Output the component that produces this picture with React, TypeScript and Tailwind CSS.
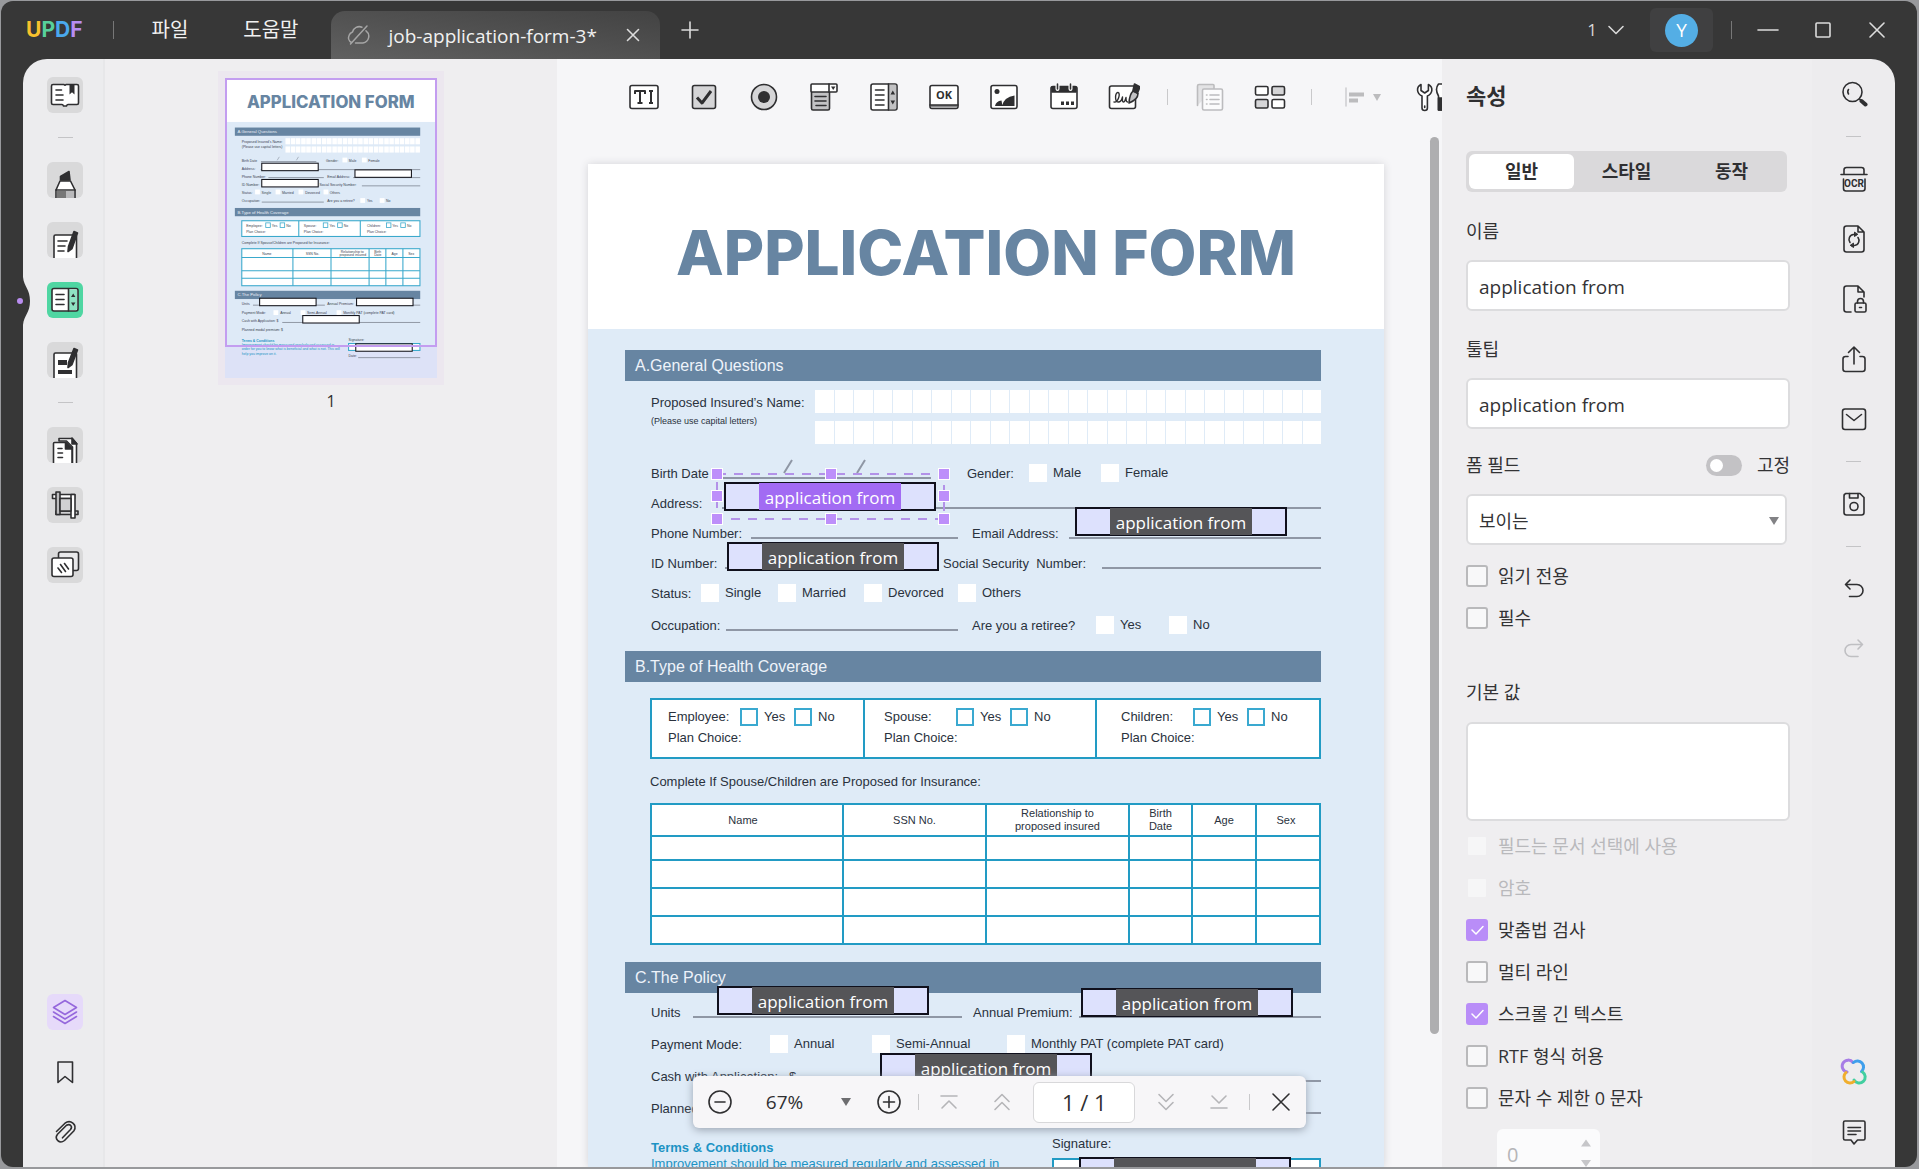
import type { ReactNode } from "react";

const UI = "font-['Open_Sans','Noto_Sans_CJK_KR',sans-serif]";
const DOC = "font-['Liberation_Sans',sans-serif]";

type IconProps = { size?: number; box?: string; children: ReactNode; className?: string };

function Icon({ size = 28, box, children, className = "" }: IconProps) {
  return (
    <svg
      width={size}
      height={size}
      viewBox={box ?? `0 0 ${size} ${size}`}
      fill="none"
      stroke="#2f2f31"
      strokeWidth="1.6"
      strokeLinecap="round"
      strokeLinejoin="round"
      className={`shrink-0 ${className}`}
      aria-hidden="true"
    >
      {children}
    </svg>
  );
}

/* ---------- Title bar ---------- */

function TitleBar() {
  return (
    <header className="flex h-[58px] shrink-0 items-center pl-[25px] text-[#f1f1f1]">
      <div className="font-['Inter',sans-serif] text-[21px] leading-6 font-bold">
        <span className="text-[#f7c12d]">U</span>
        <span className="text-[#58d09b]">P</span>
        <span className="text-[#4aa9ee]">D</span>
        <span className="text-[#b78df3]">F</span>
      </div>
      <span className="ml-[31px] h-[18px] w-px bg-[#777]" />
      <button className="ml-[37px] text-[20px] leading-7">파일</button>
      <button className="ml-[55px] text-[20px] leading-7">도움말</button>
      <div className="ml-[32px] flex h-12 w-[329px] items-center self-end rounded-t-[14px] bg-gradient-to-tr from-[#606060] via-[#515151] to-[#434343] pl-[15px]">
        <Icon size={24}>
          <g stroke="#a5a5a5" strokeWidth="1.5">
            <path d="M5.5 19.5A5.5 5.5 0 0 1 3 12.5 5.5 5.5 0 0 1 6.5 9 7 7 0 0 1 16 4.2" />
            <path d="M20 7.8A6.8 6.8 0 0 1 17 20H9.5" />
            <path d="M21 3 4.5 21" />
          </g>
        </Icon>
        <span className="ml-[19px] pt-[2px] text-[19px] leading-7">job-application-form-3*</span>
        <button aria-label="탭 닫기" className="mr-5 ml-auto">
          <Icon size={14}>
            <path d="M1.5 1.5l11 11M12.5 1.5l-11 11" stroke="#dcdcdc" />
          </Icon>
        </button>
      </div>
      <button aria-label="새 탭" className="ml-[21px]">
        <Icon size={18}>
          <path d="M9 1v16M1 9h16" stroke="#dcdcdc" />
        </Icon>
      </button>
      <div className="mr-[32px] ml-auto flex items-center">
        <button className="flex items-center gap-[10px] text-[17px] leading-6 text-[#d8d8d8]">
          1
          <Icon size={18}>
            <path d="M2 5.5l7 7 7-7" stroke="#d8d8d8" />
          </Icon>
        </button>
        <button className="ml-[25px] flex h-[44px] w-[63px] items-center justify-center rounded-md bg-[#404041]">
          <span className="flex size-[33px] items-center justify-center rounded-full bg-[#54aee5] text-[19px] leading-6 text-white">
            Y
          </span>
        </button>
        <span className="ml-[18px] h-[18px] w-px bg-[#777]" />
        <button aria-label="최소화" className="ml-[25px]">
          <Icon size={22}>
            <path d="M1 11h20" stroke="#dcdcdc" />
          </Icon>
        </button>
        <button aria-label="최대화" className="ml-[36px]">
          <Icon size={16}>
            <rect x="1" y="1" width="14" height="14" rx="1" stroke="#dcdcdc" />
          </Icon>
        </button>
        <button aria-label="닫기" className="ml-[38px]">
          <Icon size={16}>
            <path d="M1 1l14 14M15 1L1 15" stroke="#dcdcdc" />
          </Icon>
        </button>
      </div>
    </header>
  );
}

/* ---------- Left rail ---------- */

function RailButton({ label, tone = "bg-[#d9d9da]", children }: { label: string; tone?: string; children: ReactNode }) {
  return (
    <button aria-label={label} className={`size-9 overflow-hidden rounded-md ${tone}`}>
      <Icon size={36}>{children}</Icon>
    </button>
  );
}

function RailLine() {
  return <span className="h-px w-[15px] bg-[#c4c4c6]" />;
}

function LeftRail() {
  return (
    <nav className="relative flex w-[82px] shrink-0 flex-col items-center border-r-2 border-[#e7e7e9] bg-[#ececee] pt-[18px] pl-[4px]">
      {/* Current-tool marker that bites into the dark frame */}
      <svg width="32" height="48" viewBox="0 0 32 48" className="absolute top-[218px] -left-[23px]" aria-hidden="true">
        <path d="M23 0C24 10 30 12 30 24S24 38 23 48Z" fill="#373737" />
        <circle cx="20" cy="24" r="3" fill="#b98df0" />
      </svg>
      <div className="flex flex-col items-center gap-6">
        <RailButton label="리더">
          <path d="M6 7.5h11q1 1.5 2 0h11a1.5 1.5 0 0 1 1.5 1.5v17a1.5 1.5 0 0 1-1.5 1.5h-9q-1 0-1.5 1.5h-3q-.5-1.500-1.500-1.500H6A1.500 1.500 0 0 1 4.500 26V9A1.500 1.500 0 0 1 6 7.500Z" fill="#fff" />
          <path d="M9 13h5.500M9 18h7M9 23h7" />
          <path d="M22.500 7.500h5v10l-2.500-2.200-2.500 2.200Z" fill="#2f2f31" stroke="none" />
        </RailButton>
        <RailLine />
        <RailButton label="주석">
          <path d="M13.500 18v-3.500L22 9.500l1 8.500Z" fill="#2f2f31" />
          <path d="M13 19h10.500l4.500 9v10H9V28Z" fill="#fff" />
          <path d="M10 29h9v8h-9Z" fill="#777" stroke="none" />
          <path d="M19 29h8v8h-8Z" fill="#b9b9bb" stroke="none" />
          <path d="M9 28h19" />
        </RailButton>
        <RailButton label="편집">
          <path d="M7 38V14.500A1.500 1.500 0 0 1 8.500 13H28a1.500 1.500 0 0 1 1.500 1.500V38" fill="#fff" />
          <path d="M11 19h9M11 24h7M11 29h6" />
          <path d="M27 9.500l3.500 1.500-5.500 15.500-4 3 .5-5Z" fill="#2f2f31" />
        </RailButton>
        <RailButton label="양식" tone="bg-[#4fd6a2]">
          <rect x="5" y="6.500" width="26" height="22.500" rx="2" fill="#fff" />
          <path d="M21.500 7.500H29a1 1 0 0 1 1 1V27a1 1 0 0 1-1 1h-7.500Z" fill="#8fe3c3" stroke="none" />
          <path d="M21.500 7v22M9 12.500h8M9 17.500h8M9 22.500h8" />
          <path d="M24 15l2.200-3.500 2.200 3.500ZM24 20.500l2.200 3.500 2.200-3.500Z" fill="#2f2f31" stroke="none" />
        </RailButton>
        <RailButton label="보안 처리">
          <path d="M7 38V12.500A1.500 1.500 0 0 1 8.500 11H28a1.500 1.500 0 0 1 1.500 1.500V38" fill="#fff" />
          <path d="M11 18h9v5h-9ZM11 28h14v4H11Z" fill="#2f2f31" stroke="none" />
          <path d="M27 6.500l3.500 1.500-5.500 14.500-4 3 .5-5Z" fill="#2f2f31" />
        </RailButton>
        <RailLine />
        <RailButton label="페이지">
          <path d="M12 14v-2.500h13l4.500 5V38h-4V20l-6-6Z" fill="#fff" />
          <path d="M25 11l5 6h-5Z" fill="#2f2f31" />
          <path d="M6.500 38V16.500A1 1 0 0 1 7.500 15.500H19l6 6V38" fill="#fff" />
          <path d="M18.500 15.500l6.500 6.500h-6.500Z" fill="#2f2f31" />
          <path d="M11 21.500h4M11 26h4.500M11 30.500h4.500" />
        </RailButton>
        <RailButton label="자르기">
          <path d="M5.500 7.500h22v4h-22Z" fill="#fff" />
          <path d="M9 24h22v3.500H9Z" fill="#d0d0d2" />
          <path d="M9 5h4v22.500H9Z" fill="#bdbdbf" />
          <path d="M24 7.500h4V31h-4Z" fill="#fff" />
          <path d="M13 11.500h11V24H13Z" fill="#d0d0d2" />
        </RailButton>
        <RailButton label="배경">
          <rect x="11.500" y="5" width="20" height="18.500" rx="2" fill="#e9e9eb" />
          <rect x="5" y="11" width="21" height="18.500" rx="2" fill="#fff" />
          <path d="M11 21l3.500 4.500M13.500 17.500l5 7M17.500 16.500l4 5.500" />
        </RailButton>
      </div>
      <div className="mt-auto mb-[17px] flex flex-col items-center gap-6">
        <RailButton label="썸네일" tone="bg-[#e6dafa]">
          <g stroke="#9568dc">
            <path d="M18 6.500l11.500 7L18 20.500l-11.500-7Z" />
            <path d="M6.500 18L18 25l11.500-7M6.500 22.500L18 29.500l11.500-7" />
          </g>
        </RailButton>
        <RailButton label="북마크" tone="bg-transparent">
          <path d="M11 8h14.500v20.500L18 22.500l-7 6Z" />
        </RailButton>
        <RailButton label="첨부 파일" tone="bg-transparent">
          <path d="M9.500 17.500l8.500-8.300c5.500-4.200 12.500 1.500 9 7.500l-9.500 9.800c-5 4-10.500-1.500-7-6.200l9-9c3.500-2 6.500 1 4 4.200l-8 8.300" />
        </RailButton>
      </div>
    </nav>
  );
}

/* ---------- Thumbnail ---------- */

const thumbText: [number, number, string][] = [
  [63, 244, "Proposed Insured's Name:"], [63, 261, "(Please use capital letters)"],
  [63, 314, "Birth Date"], [379, 314, "Gender:"], [465, 314, "Male"], [538, 314, "Female"],
  [63, 344, "Address:"], [63, 374, "Phone Number:"], [384, 374, "Email Address:"],
  [63, 405, "ID Number:"], [355, 405, "Social Security Number:"],
  [63, 435, "Status:"], [137, 435, "Single"], [214, 435, "Married"], [301, 435, "Devorced"], [393, 435, "Others"],
  [63, 466, "Occupation:"], [384, 466, "Are you a retiree?"], [533, 466, "Yes"], [605, 466, "No"],
  [80, 559, "Employee:"], [176, 559, "Yes"], [230, 559, "No"], [80, 581, "Plan Choice:"],
  [296, 559, "Spouse:"], [392, 559, "Yes"], [446, 559, "No"], [296, 581, "Plan Choice:"],
  [533, 559, "Children:"], [628, 559, "Yes"], [683, 559, "No"], [533, 581, "Plan Choice:"],
  [63, 624, "Complete If Spouse/Children are Proposed for Insurance:"],
  [140, 663, "Name"], [303, 663, "SSN No."], [435, 656, "Relationship to"], [430, 670, "proposed insured"],
  [560, 656, "Birth"], [560, 670, "Date"], [625, 663, "Age"], [688, 663, "Sex"],
  [63, 853, "Units"], [384, 853, "Annual Premium:"],
  [63, 886, "Payment Mode:"], [207, 887, "Annual"], [308, 887, "Semi-Annual"], [444, 887, "Monthly PAT (complete PAT card)"],
  [63, 918, "Cash with Application:   $"], [63, 950, "Planned modal premium:   $"],
  [464, 986, "Signature:"], [464, 1048, "Date:"],
];

const thumbLines: [number, number, number][] = [
  [135, 314, 343], [134, 344, 733], [163, 374, 371], [481, 374, 733], [138, 405, 350], [514, 405, 733],
  [138, 466, 371], [105, 853, 375], [490, 853, 733], [215, 918, 733], [500, 1050, 733],
];

const thumbChecks: [number, number][] = [
  [441, 299], [514, 299], [113, 419], [190, 419], [276, 419], [370, 419], [508, 451], [581, 451],
  [182, 872], [284, 872], [419, 872],
];

const thumbFields: [number, number][] = [
  [138, 320], [488, 345], [138, 381], [130, 827], [494, 827], [292, 892], [491, 998],
];

function Thumbnail() {
  return (
    <svg viewBox="0 0 796 1127" className={`w-[212px] ${DOC}`} fontSize="13" fill="#3b4350" aria-label="1페이지">
      <rect width="796" height="1127" fill="#deeaf7" />
      <rect y="1010" width="796" height="117" fill="#dde2f7" />
      <rect width="796" height="165" fill="#fff" />
      <text x="397" y="113" fontSize="63" fontWeight="800" textAnchor="middle" fill="#6785a2" className="font-['Inter',sans-serif]">
        APPLICATION FORM
      </text>
      {[186, 488, 799].map((y) => (
        <rect key={y} x="37" y={y} width="696" height="31" fill="#6785a2" />
      ))}
      <g fill="#e9eff7" fontSize="16">
        <text x="47" y="207">A.General Questions</text>
        <text x="47" y="509">B.Type of Health Coverage</text>
        <text x="47" y="820">C.The Policy</text>
      </g>
      {[226, 257].map((y) => (
        <g key={y}>
          {Array.from({ length: 26 }, (_, i) => (
            <rect key={i} x={227 + Math.round(i * 19.5)} y={y} width="17" height="23" fill="#fff" />
          ))}
        </g>
      ))}
      {thumbChecks.map(([x, y]) => (
        <rect key={`${x}-${y}`} x={x} y={y} width="18" height="18" fill="#fff" />
      ))}
      <g fill="#fff" stroke="#3aa9cc" strokeWidth="4">
        <rect x="63" y="536" width="669" height="59" />
        <rect x="63" y="641" width="669" height="139" />
        <path d="M277 536v59M508 536v59M63 674h669M63 724h669M63 752h669M255 641v139M398 641v139M541 641v139M604 641v139M668 641v139" />
        {[153, 207, 369, 423, 606, 660].map((x) => (
          <rect key={x} x={x} y="544" width="17" height="17" strokeWidth="3" />
        ))}
      </g>
      {thumbLines.map(([x, y, end]) => (
        <path key={`${x}-${y}`} d={`M${x} ${y}H${end}`} stroke="#7d8592" strokeWidth="3" />
      ))}
      <path d="M196 309l8-13M268 309l8-13" stroke="#7d8592" strokeWidth="2" />
      {thumbText.map(([x, y, t]) => (
        <text key={`${x}-${y}`} x={x} y={y}>{t}</text>
      ))}
      <g fill="#1c93c4">
        <text x="63" y="990" fontWeight="700">Terms &amp; Conditions</text>
        <text x="63" y="1007">Improvement should be measured regularly and assessed in</text>
        <text x="63" y="1023">order for you to know what is beneficial and what is not. This will</text>
        <text x="63" y="1039">help you improve on it.</text>
      </g>
      <rect x="464" y="997" width="268" height="26" fill="#fff" stroke="#3aa9cc" strokeWidth="4" />
      {thumbFields.map(([x, y]) => (
        <rect key={`${x}-${y}`} x={x} y={y} width="212" height="28" fill="#fff" stroke="#15151c" strokeWidth="4" />
      ))}
    </svg>
  );
}

function ThumbnailPanel() {
  return (
    <aside className="flex w-[452px] shrink-0 flex-col items-center bg-[#efeef0] pt-[19px]">
      <button className="relative shadow-[0_0_0_7px_#ece7ef]">
        <Thumbnail />
        <span className="absolute inset-x-0 top-0 h-[269px] border-2 border-[#c39df0]" />
      </button>
      <span className="mt-[11px] text-[16px] leading-6 text-[#2f2f31]">1</span>
    </aside>
  );
}

/* ---------- Form toolbar ---------- */

function ToolCell({ label, children }: { label: string; children: ReactNode }) {
  return (
    <button aria-label={label} className="flex w-[60px] shrink-0 justify-center">
      <Icon size={32}>{children}</Icon>
    </button>
  );
}

function FormToolbar() {
  return (
    <div className="flex h-[76px] shrink-0 items-center overflow-hidden pl-[57px]">
      <ToolCell label="텍스트 필드">
        <rect x="2" y="4.500" width="28" height="23" rx="2" fill="#fff" />
        <path d="M7 13V10h10v3M12 10v12M9.500 22h5M21 10h4M21 22h4M23 10v12" strokeLinecap="butt" strokeWidth="2" />
      </ToolCell>
      <ToolCell label="체크 박스">
        <rect x="4.500" y="4.500" width="23" height="23" rx="2" fill="#d5d5d7" />
        <path d="M9 16.500l5 5.500 9-12" strokeWidth="3" strokeLinecap="butt" />
      </ToolCell>
      <ToolCell label="라디오 버튼">
        <circle cx="16" cy="16" r="12.500" fill="#d5d5d7" />
        <circle cx="16" cy="16" r="6" fill="#2f2f31" stroke="none" />
      </ToolCell>
      <ToolCell label="드롭다운">
        <path d="M3.500 10h18v17.500a1.500 1.500 0 0 1-1.500 1.500H5a1.500 1.500 0 0 1-1.500-1.500Z" fill="#c2c2c4" />
        <rect x="3" y="3" width="26" height="8" rx="1" fill="#fff" />
        <path d="M21 3v8" />
        <path d="M23 5.500h4.500L25.200 9Z" fill="#2f2f31" stroke="none" />
        <path d="M7 15.500h11M7 20h11M8 24.500h10" />
      </ToolCell>
      <ToolCell label="목록 상자">
        <rect x="3" y="3" width="26" height="26" rx="2" fill="#fff" />
        <path d="M21 3.800h6.500q.7 0 .7.700v23q0 .7-.7.700H21Z" fill="#c2c2c4" stroke="none" />
        <path d="M20.500 3v26M7.500 9H16M7.500 14H16M7.500 19H16M7.500 24H16" />
        <path d="M22.500 13.500l2.300-4 2.300 4ZM22.500 19.500l2.300 4 2.300-4Z" fill="#2f2f31" stroke="none" />
      </ToolCell>
      <ToolCell label="버튼">
        <rect x="2" y="4.500" width="28" height="23" rx="2" fill="#fff" />
        <path d="M3 24h26v2.500H3Z" fill="#8b8b8d" stroke="none" />
        <path d="M2 24h28" />
        <text x="16" y="18" fontSize="11" fontWeight="700" textAnchor="middle" fill="#2f2f31" stroke="none">
          OK
        </text>
      </ToolCell>
      <ToolCell label="이미지 필드">
        <rect x="3" y="4.500" width="26" height="23" rx="2" fill="#fff" />
        <circle cx="9" cy="10.500" r="2.500" fill="#2f2f31" stroke="none" />
        <path d="M7 25q1-5 6.500-5.500l1 5.500ZM14 25q2-9 12.500-10.500V25Z" fill="#2f2f31" stroke="none" />
      </ToolCell>
      <ToolCell label="날짜">
        <rect x="3" y="5.500" width="26" height="22" rx="2" fill="#fff" />
        <path d="M4 6h24v5H4Z" fill="#2f2f31" />
        <path d="M9.500 4v4M22.500 4v4" stroke="#fff" strokeWidth="4" />
        <path d="M9.500 3v5M22.500 3v5" />
        <path d="M13 20.500h3v3.500h-3ZM18 20.500h3v3.500h-3ZM23 20.500h3v3.500h-3Z" fill="#2f2f31" stroke="none" />
      </ToolCell>
      <ToolCell label="디지털 서명">
        <rect x="1.500" y="5" width="26" height="22.500" rx="2" fill="#fff" />
        <path d="M6 21c4 1 7-9 4-9.500s-3.500 9 0 9.500 4-3.500 4.500-5c0 2-.5 5 1 5s2-3 2.500-4.500c0 2 0 4.500 1.500 4.500" strokeWidth="1.400" />
        <path d="M25 10l5 2.500q0 6-9 9.500 .5-8.500 4-12Z" fill="#c2c2c4" />
        <path d="M26.500 3l5.500 3-2.500 6-4.500-2.500Z" fill="#2f2f31" />
      </ToolCell>
      <span className="ml-[13px] h-4 w-px shrink-0 bg-[#c9c9cb]" />
      <div className="ml-[12px] flex">
        <ToolCell label="복제">
          <g stroke="#bcbcbe">
            <path d="M3.500 24.500V5q0-1.500 1.500-1.500h14q1 0 1 1v3" fill="#e3e3e5" />
            <rect x="8.500" y="8" width="20" height="21" rx="1.500" fill="#fbfbfc" />
            <path d="M12.500 14h.5M16 14h9M12.500 18.500h.5M16 18.500h9M12.500 23h.5M16 23h9" />
          </g>
        </ToolCell>
        <ToolCell label="정렬 배치">
          <rect x="1.500" y="5.500" width="12.500" height="8.500" rx="1.500" fill="#fff" />
          <rect x="18" y="5.500" width="12.500" height="8.500" rx="1.500" fill="#d5d5d7" />
          <rect x="1.500" y="18.500" width="12.500" height="8.500" rx="1.500" fill="#d5d5d7" />
          <rect x="18" y="18.500" width="12.500" height="8.500" rx="1.500" fill="#fff" />
        </ToolCell>
      </div>
      <span className="ml-[11px] h-4 w-px shrink-0 bg-[#c9c9cb]" />
      <button aria-label="맞춤" className="ml-[32px] flex shrink-0 items-center gap-1">
        <Icon size={24}>
          <path d="M2 3v18" stroke="#d0d0d2" />
          <path d="M5 9.500h15M5 15.500h9" stroke="#bcbcbe" strokeWidth="4" strokeLinecap="butt" />
        </Icon>
        <Icon size={10}>
          <path d="M1 2h8L5 9Z" fill="#bcbcbe" stroke="none" />
        </Icon>
      </button>
      <button aria-label="도구" className="ml-[33px] shrink-0">
        <Icon size={32}>
          <path d="M6 3.500C1 6 1.500 12.500 7 15v12q0 2.500 2.700 2.500T12.400 27V15c5.500-2.500 6-9 1-11.500v6L9.700 12 6 9.500Z" fill="#fff" />
          <path d="M9.700 25v1.500" />
          <path d="M23.500 3q-4 5 0 12v14h5V3Z" fill="#fff" />
          <path d="M23.500 17h3v12h-3Z" fill="#2f2f31" />
        </Icon>
      </button>
    </div>
  );
}

/* ---------- Document page ---------- */

function Bar({ children }: { children: ReactNode }) {
  return <h2 className="h-[31px] bg-[#6785a2] pl-[10px] text-[16px] leading-[31px] text-[#eef3fa]">{children}</h2>;
}

function Row({ height = "h-[30px]", children }: { height?: string; children: ReactNode }) {
  return <div className={`flex items-end ${height}`}>{children}</div>;
}

function Rule({ className = "flex-1" }: { className?: string }) {
  return <span className={`mb-[3px] h-[2px] shrink-0 bg-[#8f97a5] ${className}`} />;
}

function Check({ children, className = "" }: { children: ReactNode; className?: string }) {
  return (
    <label className={`flex h-[19px] shrink-0 items-center gap-[6px] ${className}`}>
      <input type="checkbox" className="size-[18px] appearance-none bg-white" />
      {children}
    </label>
  );
}

function PlanCell({ who, className }: { who: string; className: string }) {
  return (
    <div className={`flex flex-col gap-1 pt-[8px] ${className}`}>
      <div className="flex h-[18px] items-center">
        <span className="w-[72px]">{who}</span>
        {["Yes", "No"].map((t) => (
          <label key={t} className="flex w-[54px] items-center gap-[6px]">
            <input type="checkbox" className="size-[18px] appearance-none border-2 border-[#3aa9d0] bg-white" />
            {t}
          </label>
        ))}
      </div>
      <span>Plan Choice:</span>
    </div>
  );
}

function FormField({ className, active = false }: { className: string; active?: boolean }) {
  return (
    <button
      className={`absolute flex h-[29px] w-[212px] justify-center border-2 border-[#10101c] bg-[#dde1fd] ${UI} ${className}`}
    >
      <span
        className={`-my-px h-[27px] w-[142px] text-center text-[17px] leading-[30px] whitespace-nowrap text-white ${
          active ? "bg-[#a26bf3]" : "bg-[#555558]"
        }`}
      >
        application from
      </span>
    </button>
  );
}

function SelectionFrame() {
  const handle = "absolute size-3 border border-white bg-[#bd8ffa]";
  return (
    <div className="absolute top-[309px] left-[128px] h-[47px] w-[229px]">
      <svg width="100%" height="100%" className="absolute inset-0" aria-hidden="true">
        <rect x="1" y="1" width="227" height="45" fill="none" stroke="#b392e8" strokeWidth="2" strokeDasharray="9 8" />
      </svg>
      <span className={`${handle} -top-[5px] -left-[5px]`} />
      <span className={`${handle} -top-[5px] left-[109px]`} />
      <span className={`${handle} -top-[5px] -right-[5px]`} />
      <span className={`${handle} top-[17px] -left-[5px]`} />
      <span className={`${handle} top-[17px] -right-[5px]`} />
      <span className={`${handle} -bottom-[5px] -left-[5px]`} />
      <span className={`${handle} -bottom-[5px] left-[109px]`} />
      <span className={`${handle} -right-[5px] -bottom-[5px]`} />
    </div>
  );
}

const columns = [
  { title: "Name", width: "w-[192px] pr-2" },
  { title: "SSN No.", width: "w-[143px]" },
  { title: "Relationship to proposed insured", width: "w-[143px] px-6" },
  { title: "Birth Date", width: "w-[63px] px-4" },
  { title: "Age", width: "w-[64px]" },
  { title: "Sex", width: "w-[64px] pr-1" },
];

const rowHeights = ["h-6", "h-7", "h-7", "h-7"];

function DocumentPage() {
  return (
    <article className={`relative w-[796px] shrink-0 bg-[#dfebf7] text-[13px] leading-4 text-[#2a323d] shadow-[0_0_8px_#d4d4d8] ${DOC}`}>
      <h1 className="flex h-[165px] items-center justify-center bg-white pt-[12px] font-['Inter',sans-serif] text-[62px] leading-[72px] font-extrabold text-[#6785a2]">
        APPLICATION FORM
      </h1>
      <div className="pt-[21px] pr-[63px] pl-[37px]">
        <Bar>A.General Questions</Bar>
        <div className="pl-[26px]">
          <div className="mt-[9px] flex">
            <div className="w-[164px] pt-[5px]">
              <p>Proposed Insured’s Name:</p>
              <p className="pt-[2px] text-[9px]">(Please use capital letters)</p>
            </div>
            <div className="flex flex-1 flex-col gap-2">
              {[0, 1].map((line) => (
                <div key={line} className="flex h-[23px] gap-px">
                  {Array.from({ length: 26 }, (_, i) => (
                    <span key={i} className="flex-1 bg-white" />
                  ))}
                </div>
              ))}
            </div>
          </div>
          <div className="mt-2">
            <Row>
              <span className="w-[72px]">Birth Date</span>
              <Rule className="w-[208px]" />
              <span className="ml-[36px] w-[62px]">Gender:</span>
              <Check className="w-[72px]">Male</Check>
              <Check>Female</Check>
            </Row>
            <Row>
              <span className="w-[71px]">Address:</span>
              <Rule />
            </Row>
            <Row>
              <span className="w-[100px]">Phone Number:</span>
              <Rule className="w-[207px]" />
              <span className="ml-[14px] w-[97px]">Email Address:</span>
              <Rule />
            </Row>
            <Row>
              <span className="w-[74px]">ID Number:</span>
              <Rule className="w-[207px]" />
              <span className="ml-[11px] w-[159px] whitespace-pre">Social Security  Number:</span>
              <Rule />
            </Row>
            <Row>
              <span className="w-[50px]">Status:</span>
              <Check className="w-[77px]">Single</Check>
              <Check className="w-[86px]">Married</Check>
              <Check className="w-[94px]">Devorced</Check>
              <Check>Others</Check>
            </Row>
            <Row height="h-8">
              <span className="w-[75px]">Occupation:</span>
              <Rule className="w-[232px]" />
              <span className="ml-[14px] w-[124px]">Are you a retiree?</span>
              <Check className="w-[73px]">Yes</Check>
              <Check>No</Check>
            </Row>
          </div>
        </div>

        <div className="h-[17px]" />
        <Bar>B.Type of Health Coverage</Bar>
        <div className="mt-4 pl-[25px]">
          <div className="flex h-[61px] border-2 border-[#229bc4] bg-white">
            <PlanCell who="Employee:" className="w-[213px] border-r-2 border-[#229bc4] pl-[16px]" />
            <PlanCell who="Spouse:" className="w-[232px] border-r-2 border-[#229bc4] pl-[19px]" />
            <PlanCell who="Children:" className="pl-[24px]" />
          </div>
          <p className="mt-[15px]">Complete If Spouse/Children are Proposed for Insurance:</p>
          <table className="mt-[13px] w-full table-fixed border-collapse bg-white">
            <thead>
              <tr className="h-8">
                {columns.map((c) => (
                  <th key={c.title} className={`border-2 border-[#229bc4] text-[11px] leading-[13px] font-normal ${c.width}`}>
                    {c.title}
                  </th>
                ))}
              </tr>
            </thead>
            <tbody>
              {rowHeights.map((h, i) => (
                <tr key={i} className={h}>
                  {columns.map((c) => (
                    <td key={c.title} className="border-2 border-[#229bc4] p-0" />
                  ))}
                </tr>
              ))}
            </tbody>
          </table>
        </div>

        <div className="h-[17px]" />
        <Bar>C.The Policy</Bar>
        <div className="flex flex-col pl-[26px]">
          <Row height="h-7">
            <span className="w-[42px]">Units</span>
            <Rule className="w-[269px]" />
            <span className="ml-[11px] w-[106px]">Annual Premium:</span>
            <Rule />
          </Row>
          <Row height="h-8">
            <span className="w-[119px]">Payment Mode:</span>
            <Check className="w-[102px]">Annual</Check>
            <Check className="w-[135px]">Semi-Annual</Check>
            <Check>Monthly PAT (complete PAT card)</Check>
          </Row>
          <Row height="h-8">
            <span className="w-[158px] whitespace-pre">Cash with Application:   $</span>
            <Rule />
          </Row>
          <Row height="h-8">
            <span className="w-[158px] whitespace-pre">Planned modal premium:  $</span>
            <Rule />
          </Row>
        </div>
        <div className="flex pt-[23px] pl-[26px]">
          <div className="w-[401px] text-[#1c93c4]">
            <p className="font-bold">Terms &amp; Conditions</p>
            <p className="pr-8">
              Improvement should be measured regularly and assessed in order for you to know what is beneficial
            </p>
          </div>
          <div className="-mt-1 flex-1">
            <p>Signature:</p>
            <div className="mt-[6px] h-[28px] border-2 border-[#229bc4] bg-white" />
          </div>
        </div>
      </div>

      {/* Date separators */}
      <svg width="84" height="16" viewBox="0 0 84 16" className="absolute top-[295px] left-[195px]" stroke="#8f97a5" strokeWidth="2" aria-hidden="true">
        <path d="M1 14L9 1M74 14L82 1" />
      </svg>

      {/* Form fields placed on the page */}
      <FormField className="top-[318px] left-[136px]" active />
      <FormField className="top-[343px] left-[487px]" />
      <FormField className="top-[378px] left-[139px]" />
      <FormField className="top-[822px] left-[129px]" />
      <FormField className="top-[824px] left-[493px]" />
      <FormField className="top-[889px] left-[292px]" />
      <FormField className="top-[993px] left-[491px]" />
      <SelectionFrame />
    </article>
  );
}

function Pager() {
  return (
    <div className="absolute inset-x-0 bottom-[39px] flex justify-center">
      <div className="flex h-[52px] items-center rounded-md bg-[#f7f6f8] px-[15px] text-[#2f2f31] shadow-[0_2px_8px_#9aa3b0]">
        <button aria-label="축소">
          <Icon size={24}>
            <circle cx="12" cy="12" r="11" />
            <path d="M7 12h10" />
          </Icon>
        </button>
        <button className="ml-[34px] flex items-center text-[19px] leading-7">
          67%
          <Icon size={12} className="ml-[37px]">
            <path d="M1 2h10L6 10Z" fill="#6d6d70" stroke="none" />
          </Icon>
        </button>
        <button aria-label="확대" className="ml-[25px]">
          <Icon size={24}>
            <circle cx="12" cy="12" r="11" />
            <path d="M6.500 12h11M12 6.500v11" />
          </Icon>
        </button>
        <span className="ml-[17px] h-4 w-px bg-[#c9c9cb]" />
        <button aria-label="첫 페이지" className="ml-[20px]">
          <Icon size={20}>
            <path d="M2 4h16M3 16l7-7 7 7" stroke="#b5b5b8" />
          </Icon>
        </button>
        <button aria-label="이전 페이지" className="ml-[33px]">
          <Icon size={20}>
            <path d="M3 9.500l7-7 7 7M3 17.500l7-7 7 7" stroke="#b5b5b8" />
          </Icon>
        </button>
        <input
          aria-label="페이지 번호"
          defaultValue="1 / 1"
          className="ml-[21px] h-[41px] w-[102px] rounded-md border border-[#d8d8da] bg-white text-center text-[22px]"
        />
        <button aria-label="다음 페이지" className="ml-[21px]">
          <Icon size={20}>
            <path d="M3 2.500l7 7 7-7M3 10.500l7 7 7-7" stroke="#b5b5b8" />
          </Icon>
        </button>
        <button aria-label="마지막 페이지" className="ml-[33px]">
          <Icon size={20}>
            <path d="M3 4l7 7 7-7M2 16h16" stroke="#b5b5b8" />
          </Icon>
        </button>
        <span className="ml-[20px] h-4 w-px bg-[#c9c9cb]" />
        <button aria-label="도구 모음 닫기" className="ml-[21px]">
          <Icon size={20}>
            <path d="M2 2l16 16M18 2L2 18" />
          </Icon>
        </button>
      </div>
    </div>
  );
}

function Workspace() {
  return (
    <main className="relative flex min-w-0 flex-1 flex-col bg-[#f6f6f8]">
      <FormToolbar />
      <div className="flex min-h-0 flex-1 overflow-hidden pt-[29px] pl-[31px]">
        <DocumentPage />
        <span className="-mt-[27px] mr-[3px] ml-auto h-[897px] w-[9px] shrink-0 rounded-full bg-[#aeaeb0]" />
      </div>
      <Pager />
    </main>
  );
}

/* ---------- Properties ---------- */

function Tick({ label, checked = false, disabled = false }: { label: string; checked?: boolean; disabled?: boolean }) {
  return (
    <label className={`flex h-[42px] items-center gap-[10px] text-[18px] leading-6 ${disabled ? "text-[#b9b9bc]" : "text-[#333335]"}`}>
      <span className="relative size-[22px]">
        <input
          type="checkbox"
          defaultChecked={checked}
          disabled={disabled}
          className={`block size-[22px] appearance-none rounded-[3px] ${
            disabled ? "border-2 border-[#efeef0] bg-[#f6f6f7]" : "border-2 border-[#b9b9bb] bg-[#f8f8f9] checked:border-[#b98df8] checked:bg-[#b98df8]"
          }`}
        />
        {checked && (
          <Icon size={22} className="pointer-events-none absolute inset-0">
            <path d="M6 11l4 4 7-7.500" stroke="#fff" strokeWidth="1.500" />
          </Icon>
        )}
      </span>
      {label}
    </label>
  );
}

const field = "block w-full rounded-md border-2 border-[#dcdcde] bg-white pl-[11px] text-[#333335]";
const caption = "block text-[18px] leading-6 text-[#333335]";

function Properties() {
  return (
    <section className="flex w-[370px] shrink-0 flex-col overflow-hidden bg-[#efeef0] pt-[22px] pr-[22px] pl-[24px]">
      <h2 className="text-[22px] leading-7 font-bold text-[#2f2f31]">속성</h2>
      <div className="mt-[42px] mr-[3px] grid h-[41px] shrink-0 grid-cols-3 rounded-md bg-[#dad9db] p-[3px] text-[18px] font-bold text-[#2f2f31]">
        <button className="rounded-md bg-white">일반</button>
        <button>스타일</button>
        <button>동작</button>
      </div>
      <label htmlFor="name" className={`mt-[27px] ${caption}`}>이름</label>
      <input id="name" defaultValue="application from" className={`mt-[17px] h-[51px] shrink-0 pt-[3px] text-[19px] ${field}`} />
      <label htmlFor="tip" className={`mt-[26px] ${caption}`}>툴팁</label>
      <input id="tip" defaultValue="application from" className={`mt-[17px] h-[51px] shrink-0 pt-[3px] text-[19px] ${field}`} />
      <div className="mt-[24px] flex items-center">
        <label htmlFor="visibility" className={caption}>폼 필드</label>
        <label className="ml-auto flex items-center gap-[15px] text-[18px] leading-6 text-[#333335]">
          <span className="relative h-[21px] w-[36px]">
            <input type="checkbox" role="switch" className="block h-[21px] w-[36px] appearance-none rounded-full bg-[#c3c2c5]" />
            <span className="pointer-events-none absolute top-[4px] left-[4px] size-[13px] rounded-full bg-white" />
          </span>
          고정
        </label>
      </div>
      <div className="relative mt-[17px] mr-[3px]">
        <select id="visibility" className={`h-[51px] appearance-none pt-[3px] text-[18px] ${field}`}>
          <option>보이는</option>
        </select>
        <Icon size={10} className="pointer-events-none absolute top-[22px] right-[8px]">
          <path d="M0 1h10L5 9Z" fill="#828285" stroke="none" />
        </Icon>
      </div>
      <div className="mt-[10px]">
        <Tick label="읽기 전용" />
        <Tick label="필수" />
      </div>
      <label htmlFor="default" className={`mt-[41px] ${caption}`}>기본 값</label>
      <textarea id="default" className={`mt-[18px] h-[99px] shrink-0 resize-none ${field}`} />
      <div className="mt-[4px]">
        <Tick label="필드는 문서 선택에 사용" disabled />
        <Tick label="암호" disabled />
        <Tick label="맞춤법 검사" checked />
        <Tick label="멀티 라인" />
        <Tick label="스크롤 긴 텍스트" checked />
        <Tick label="RTF 형식 허용" />
        <Tick label="문자 수 제한 0 문자" />
      </div>
      <div className="relative mt-[10px] ml-[31px] w-[103px] shrink-0">
        <input
          aria-label="문자 수"
          defaultValue="0"
          disabled
          className="block h-[51px] w-full rounded-md bg-[#fbfbfc] pl-[10px] text-[20px] text-[#b5b5b8]"
        />
        <Icon size={28} className="absolute top-[10px] right-0">
          <path d="M9 7.500l5-7 5 7ZM9 21h10l-5 7Z" fill="#c6c6c9" stroke="none" />
        </Icon>
      </div>
    </section>
  );
}

/* ---------- Right rail ---------- */

function RightButton({ label, children }: { label: string; children: ReactNode }) {
  return (
    <button aria-label={label} className="flex h-9 w-9 items-center justify-center">
      <Icon size={28}>{children}</Icon>
    </button>
  );
}

function RightRail() {
  return (
    <nav className="flex w-[83px] shrink-0 flex-col items-center bg-[#edecee] pt-[17px]">
      <div className="flex flex-col items-center gap-6">
        <RightButton label="검색">
          <circle cx="12.500" cy="12" r="9.500" />
          <path d="M8.500 9.500q-1.500 2 0 4.500" />
          <path d="M19.500 19l1.500 1.500" />
          <path d="M21.500 21l4 3.500" strokeWidth="4" />
        </RightButton>
        <RailLine />
        <RightButton label="OCR">
          <path d="M4 9V5q0-2.500 2.500-2.500h15Q24 2.500 24 5v4M1 9.500h26M3.500 14v9.500Q3.500 26 6 26h16.500q2.500 0 2.500-2.500V14" />
          <text x="14" y="22" fontSize="10" fontWeight="700" textAnchor="middle" fill="#2f2f31" stroke="none" className="font-['Roboto',sans-serif]">
            OCR
          </text>
        </RightButton>
        <RightButton label="PDF 변환">
          <path d="M18 1H6.500Q4 1 4 3.500v21Q4 27 6.500 27h15q2.500 0 2.500-2.500V7ZM18 1v6h6" />
          <path d="M16 9.500h-2.500a5 5 0 0 0-3.500 8M12 20.500h2.500a5 5 0 0 0 3.500-8" />
          <path d="M14.500 7.500v4l3-2ZM13.500 18.500v4l-3-2Z" fill="#2f2f31" strokeWidth="1" />
        </RightButton>
        <RightButton label="암호로 보호">
          <path d="M24 12V7l-6-6H6.500Q4 1 4 3.500v21Q4 27 6.500 27h4.500M18 1v6h6" />
          <rect x="15" y="18" width="11" height="9" rx="1.500" />
          <path d="M17.500 18v-1.500a3 3 0 0 1 6 0V18M19.500 22.500h2" />
        </RightButton>
        <RightButton label="공유">
          <path d="M14 19V2.500M8.500 7.500L14 2l5.500 5.500M8 11.500H5.500Q3 11.500 3 14v10q0 2.500 2.500 2.500h17Q25 26.500 25 24V14q0-2.500-2.500-2.500H20" />
        </RightButton>
        <RightButton label="이메일">
          <rect x="2.500" y="4" width="23" height="20.500" rx="2.500" />
          <path d="M6.500 9.500l7.500 6 7.500-6" />
        </RightButton>
      </div>
      <div className="mt-[24px] flex flex-col items-center gap-6">
        <RailLine />
        <RightButton label="저장">
          <path d="M5.500 3.500H20l4 4V22.500Q24 25 21.500 25h-15Q4 25 4 22.500V6q0-2.500 2.500-2.500" />
          <path d="M9.500 3.500V8h8.500V3.500" />
          <circle cx="14" cy="16.500" r="4" />
        </RightButton>
        <RailLine />
        <RightButton label="실행 취소">
          <path d="M10 5l-4.500 4.500L10 14M5.500 9.500H17a6 6 0 0 1 0 12H9.500" />
        </RightButton>
        <RightButton label="다시 실행">
          <path d="M18 5l4.500 4.500L18 14M22.500 9.500H11a6 6 0 0 0 0 12h7" stroke="#bfbfc2" />
        </RightButton>
      </div>
      <div className="mt-auto mb-[17px] flex flex-col items-center gap-6">
        <RightButton label="UPDF AI">
          <g strokeWidth="3">
            <path d="M7 14a6 6 0 1 1 6-9.500" stroke="#a77de6" />
            <path d="M13.500 4.500A6 6 0 1 1 21.500 13.500" stroke="#3f9fec" />
            <path d="M22.500 14A6 6 0 1 1 14 22" stroke="#42cfa0" />
            <path d="M14 23.500A6 6 0 1 1 6 14.500" stroke="#f0ae2d" />
          </g>
        </RightButton>
        <RightButton label="댓글">
          <path d="M5 3h18.500q1.500 0 1.500 1.500v16q0 1.500-1.500 1.500H17.500L14 26l-3-4H5q-1.500 0-1.500-1.500v-16Q3.500 3 5 3ZM8 9.500h12.500M8 13h12.500M8 16.500h8" />
        </RightButton>
      </div>
    </nav>
  );
}

export default function App() {
  return (
    <div className={`h-screen overflow-hidden bg-[#98999c] pt-px pr-[2px] pb-[2px] pl-px ${UI}`}>
      <div className="flex h-full flex-col overflow-hidden rounded-xl bg-[#373737]">
        <TitleBar />
        <div className="mx-[22px] flex min-h-0 flex-1 [&>*:first-child]:rounded-tl-3xl [&>*:last-child]:rounded-tr-3xl">
          <LeftRail />
          <ThumbnailPanel />
          <Workspace />
          <Properties />
          <RightRail />
        </div>
      </div>
    </div>
  );
}
